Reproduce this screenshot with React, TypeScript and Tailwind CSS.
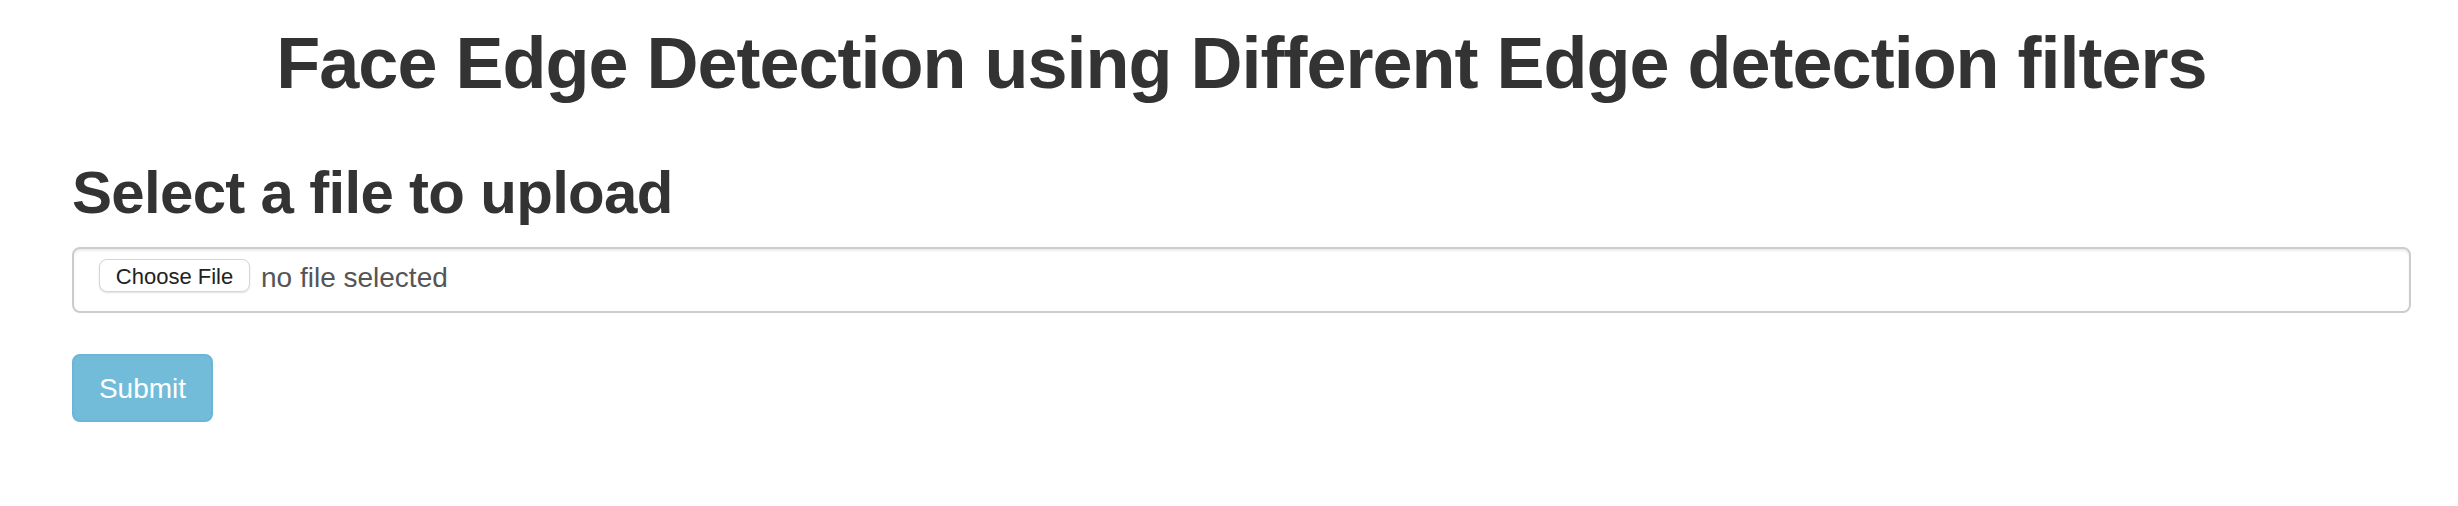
export default function App() {
  return (
    <div className="min-h-[506px] bg-white pl-[72px] pr-[47px] font-['Liberation_Sans',Arial,sans-serif] text-[#333]">
      <h1 className="pt-[24px] text-center text-[72px] font-bold leading-[79px] tracking-[-1px]">
        Face Edge Detection using Different Edge detection filters
      </h1>
      <h2 className="mt-[57px] text-[60px] font-bold leading-[66px] tracking-[-0.7px]">Select a file to upload</h2>
      <div className="mt-[21px] flex h-[66px] items-start rounded-[8px] border-2 border-[#cccccc] pl-[25px] pt-[10px] shadow-[inset_0_2px_2px_rgba(0,0,0,0.075)]">
        <div className="flex h-[33px] w-[151px] items-center justify-center rounded-[8px] border border-[#d6d6d6] bg-white pt-[2px] text-[22px] leading-[29px] text-[#222] shadow-[0_1px_2px_rgba(0,0,0,0.12)]">
          Choose File
        </div>
        <span className="ml-[11px] pt-[2px] text-[28px] leading-[33px] text-[#555]">no file selected</span>
      </div>
      <button
        type="button"
        className="mt-[41px] flex h-[68px] w-[141px] items-center justify-center rounded-[8px] border-2 border-[#6ab6d4] bg-[#72bcd9] pt-[2px] text-[28px] leading-[38px] text-white"
      >
        Submit
      </button>
    </div>
  );
}
